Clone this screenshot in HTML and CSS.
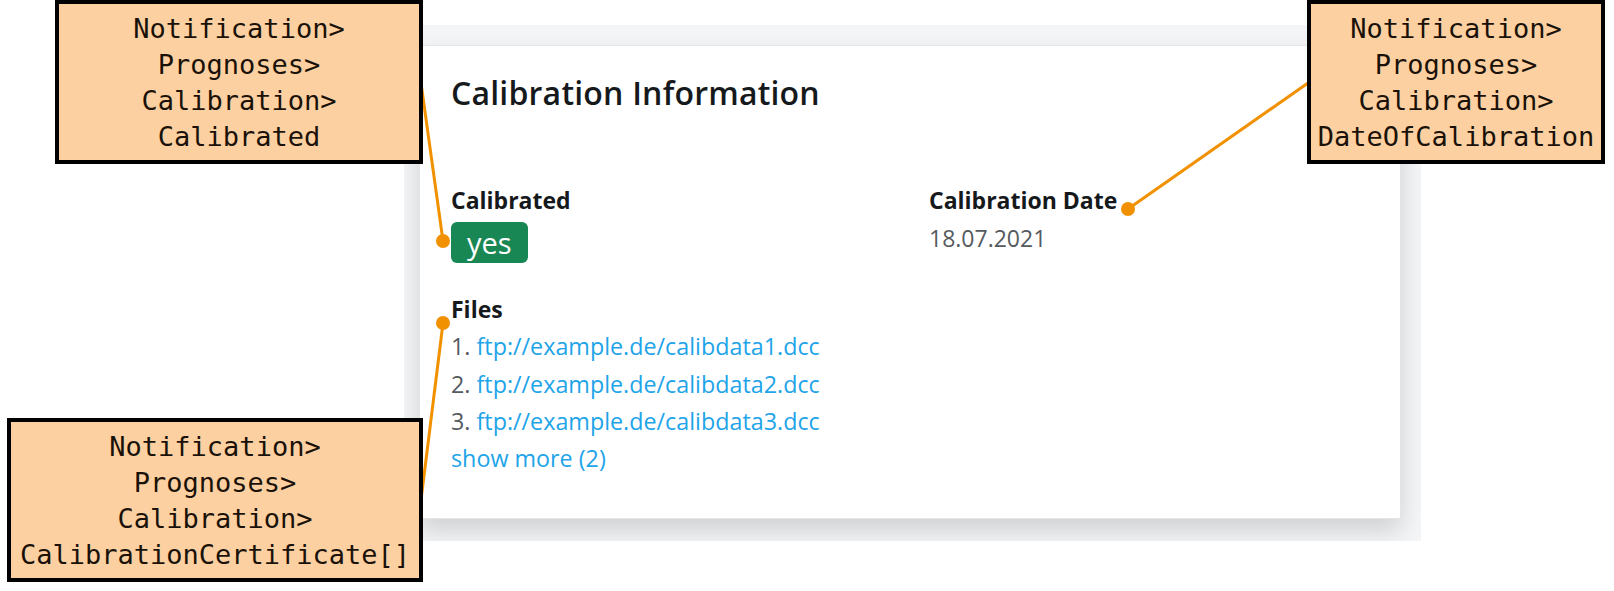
FILE: index.html
```html
<!DOCTYPE html>
<html lang="en">
<head>
<meta charset="utf-8">
<title>Calibration Information</title>
<link rel="stylesheet" href="styles.css">
</head>
<body>
<div class="stage">
  <div class="panel">
    <section class="card">
      <h3 class="card-title">Calibration Information</h3>
      <div class="fields">
        <div class="field">
          <div class="label">Calibrated</div>
          <div class="value value-badge"><span class="badge">yes</span></div>
        </div>
        <div class="field">
          <div class="label">Calibration Date</div>
          <div class="value">18.07.2021</div>
        </div>
      </div>
      <div class="files">
        <div class="label">Files</div>
        <ol class="file-list">
          <li><span class="num">1.</span> <a href="#">ftp://example.de/calibdata1.dcc</a></li>
          <li><span class="num">2.</span> <a href="#">ftp://example.de/calibdata2.dcc</a></li>
          <li><span class="num">3.</span> <a href="#">ftp://example.de/calibdata3.dcc</a></li>
        </ol>
        <a class="more" href="#">show more (2)</a>
      </div>
    </section>
  </div>

  <svg class="connectors" width="1614" height="591" viewBox="0 0 1614 591" aria-hidden="true">
    <line x1="421" y1="83" x2="443" y2="241" />
    <circle cx="443" cy="241" r="7" />
    <line x1="1308" y1="83" x2="1128" y2="209" />
    <circle cx="1128" cy="209" r="7" />
    <line x1="421" y1="500" x2="443" y2="323" />
    <circle cx="443" cy="323" r="7" />
  </svg>

  <div class="note note-calibrated">Notification&gt;<br>Prognoses&gt;<br>Calibration&gt;<br>Calibrated</div>
  <div class="note note-date">Notification&gt;<br>Prognoses&gt;<br>Calibration&gt;<br>DateOfCalibration</div>
  <div class="note note-files">Notification&gt;<br>Prognoses&gt;<br>Calibration&gt;<br>CalibrationCertificate[]</div>
</div>
</body>
</html>
```

FILE: styles.css
```css
html, body {
  margin: 0;
  padding: 0;
  background: #ffffff;
}

.stage {
  position: relative;
  width: 1614px;
  height: 591px;
  box-sizing: border-box;
  padding-top: 25px;
  overflow: hidden;
  font-family: "Open Sans", "Noto Sans", sans-serif;
  color: #212529;
}

.panel {
  width: 1017px;
  margin-left: 404px;
  box-sizing: border-box;
  padding: 20px 20px 22px 15px;
  background: #f4f5f7;
  overflow: hidden;
}

.card {
  background: #ffffff;
  border: 1px solid #e4e5e7;
  border-radius: 2px;
  box-shadow: 0 12px 24px rgba(0, 0, 0, 0.15);
  padding: 28px 31px 40px;
}

.card-title {
  margin: 0 0 71px;
  font-size: 32px;
  font-weight: 600;
  line-height: 38.4px;
  letter-spacing: 0.2px;
  color: #16191c;
}

.fields {
  display: grid;
  grid-template-columns: 1fr 1fr;
  column-gap: 38px;
}

.label {
  font-size: 23px;
  font-weight: 700;
  line-height: 34.5px;
  color: #16191c;
}

.value {
  margin-top: 3px;
  font-size: 23px;
  line-height: 34.5px;
  color: #555a5f;
}

.value-badge {
  display: flex;
  margin-top: 4px;
}

.badge {
  background: #198754;
  color: #ffffff;
  font-size: 29px;
  line-height: 41px;
  padding: 0 16px;
  border-radius: 6px;
}

.files {
  margin-top: 29px;
}

.file-list {
  list-style: none;
  margin: 2px 0 0;
  padding: 0;
  font-size: 23.3px;
  line-height: 37.3px;
  color: #555a5f;
}

.file-list a,
.more {
  color: #1ea4e9;
  text-decoration: none;
}

.more {
  display: block;
  font-size: 23.3px;
  line-height: 37.3px;
}

.connectors {
  position: absolute;
  left: 0;
  top: 0;
  pointer-events: none;
}

.connectors line {
  stroke: #f29100;
  stroke-width: 3;
}

.connectors circle {
  fill: #f29100;
}

.note {
  position: absolute;
  box-sizing: border-box;
  background: #fdd0a2;
  border: 4px solid #000000;
  padding: 7px 4px 5px;
  font-family: "DejaVu Sans Mono", "Liberation Mono", monospace;
  font-size: 27px;
  line-height: 36px;
  text-align: center;
  color: #1a1208;
  white-space: nowrap;
}

.note-calibrated {
  left: 55px;
  top: 0;
  width: 368px;
}

.note-date {
  left: 1307px;
  top: 0;
  width: 298px;
}

.note-files {
  left: 7px;
  top: 418px;
  width: 416px;
}
```
